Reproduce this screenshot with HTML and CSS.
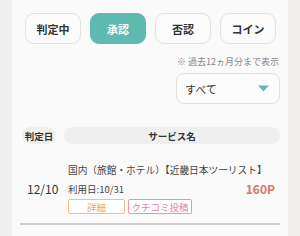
FILE: index.html
```html
<!DOCTYPE html>
<html>
<head>
<meta charset="utf-8">
<link rel="stylesheet" href="styles.css">
</head>
<body>
<div class="card">
  <div class="tabs">
    <div class="tab">判定中</div>
    <div class="tab active">承認</div>
    <div class="tab">否認</div>
    <div class="tab">コイン</div>
  </div>
  <div class="note">※ 過去12ヵ月分まで表示</div>
  <div class="select-row">
    <div class="select">
      <span>すべて</span>
      <svg class="caret" width="11" height="7" viewBox="0 0 11 7"><polygon points="0,0.5 11,0.5 5.5,6.5" fill="#5fbab1"/></svg>
    </div>
  </div>
  <div class="thead">
    <div class="th th-date">判定日</div>
    <div class="th th-name">サービス名</div>
  </div>
  <div class="row">
    <div class="date">12/10</div>
    <div class="info">
      <div class="title">国内（旅館・ホテル）【近畿日本ツーリスト】</div>
      <div class="line2">
        <span class="use">利用日:10/31</span>
        <span class="pts">160P</span>
      </div>
      <div class="btns">
        <span class="btn btn-detail">詳細</span>
        <span class="btn btn-review">クチコミ投稿</span>
      </div>
    </div>
  </div>
  <div class="divider"></div>
</div>
</body>
</html>
```
FILE: styles.css
```css
html, body {
  margin: 0;
  padding: 0;
  background: #f0efed;
  font-family: "Noto Sans CJK JP", "Noto Sans", sans-serif;
  color: #333;
}
body {
  padding: 0 12px;
  height: 236px;
  overflow: hidden;
}
.card {
  background: #fafafa;
  height: 236px;
  padding: 13px 8px 0 13px;
  box-sizing: border-box;
}
.tabs {
  display: flex;
  gap: 9px;
}
.tab {
  width: 56px;
  height: 31px;
  box-sizing: border-box;
  border: 1px solid #e1e1e1;
  border-radius: 9px;
  background: #fbfbfb;
  display: flex;
  align-items: center;
  justify-content: center;
  font-size: 11px;
  font-weight: bold;
  color: #333;
}
.tab.active {
  background: #5fbab1;
  border-color: #5fbab1;
  color: #fff;
}
.note {
  text-align: right;
  font-size: 9px;
  color: #888;
  margin-top: 11px;
  line-height: 14px;
  padding-right: 1px;
}
.select-row {
  display: flex;
  justify-content: flex-end;
  margin-top: 4px;
}
.select {
  width: 104px;
  height: 31px;
  box-sizing: border-box;
  border: 1px solid #e1e1e1;
  border-radius: 8px;
  background: #fbfbfb;
  display: flex;
  align-items: center;
  justify-content: space-between;
  padding: 0 10px 0 8px;
  font-size: 11px;
  color: #333;
}
.caret { display: block; }
.thead {
  display: flex;
  gap: 8px;
  margin-top: 23px;
  margin-left: -3px;
}
.th {
  height: 17px;
  background: #efefef;
  border-radius: 9px;
  font-size: 9.5px;
  font-weight: bold;
  color: #333;
  display: flex;
  align-items: center;
  justify-content: center;
}
.th-date { width: 34px; }
.th-name { flex: 1; }
.row {
  display: flex;
  margin-top: 19px;
}
.date {
  flex: 0 0 auto;
  width: 41px;
  padding-left: 2px;
  font-size: 12px;
  color: #333;
  display: flex;
  align-items: center;
}
.info { flex: 1; min-width: 0; }
.title {
  font-size: 9.7px;
  color: #444;
  line-height: 14px;
  white-space: nowrap;
}
.line2 {
  display: flex;
  justify-content: space-between;
  align-items: center;
  margin-top: 3px;
  padding-right: 5px;
}
.use { font-size: 9.5px; color: #444; }
.pts { font-size: 12px; font-weight: bold; color: #e0756a; }
.btns {
  display: flex;
  gap: 3px;
  margin-top: 2px;
}
.btn {
  height: 15px;
  box-sizing: border-box;
  border-radius: 2px;
  font-size: 9.5px;
  display: flex;
  align-items: center;
  justify-content: center;
  background: #fff;
}
.btn-detail {
  width: 57px;
  border: 1px solid #f2bf85;
  color: #e9a868;
}
.btn-review {
  width: 64px;
  border: 1px solid #ec92b8;
  color: #e283aa;
}
.divider {
  height: 2px;
  background: #cfcfcf;
  margin-top: 9px;
  margin-left: -5px;
}
```
